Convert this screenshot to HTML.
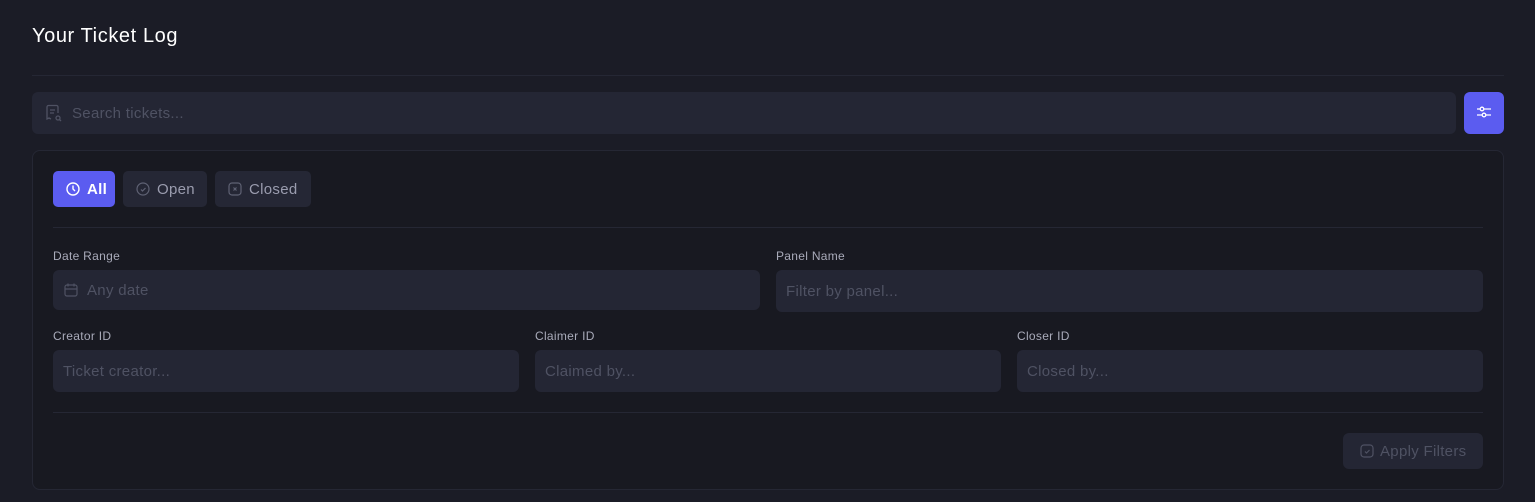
<!DOCTYPE html><html><head><style>
*{box-sizing:border-box;margin:0;padding:0}
body{width:1535px;height:502px;background:#1b1c26;font-family:"Liberation Sans",sans-serif;overflow:hidden;position:relative;letter-spacing:0.3px}
.a{position:absolute}
.in{position:absolute;background:#242634;border-radius:6px;color:#4f5263;font-size:15px;display:flex;align-items:center}
.lbl{position:absolute;color:#a9abba;font-size:12px}
.tab{position:absolute;top:171px;height:36px;border-radius:5px;background:#252735;color:#9a9cae;font-size:15px;display:flex;align-items:center;gap:7px;padding-left:13px}
</style></head><body>
<div class="a" style="left:32px;top:25px;color:#fff;font-size:20px;letter-spacing:0.6px">Your Ticket Log</div>
<div class="a" style="left:32px;top:75px;width:1472px;height:1px;background:#252734"></div>
<div class="in" style="left:32px;top:92px;width:1424px;height:42px;padding-left:40px">Search tickets...</div>
<svg class="a" style="left:45px;top:104px" width="18" height="18" fill="none" stroke="#4f5263" stroke-width="1.3"><path d="M13 9V3a1.5 1.5 0 0 0-1.5-1.5h-8A1.5 1.5 0 0 0 2 3v12l2-1 2 1M5 6h5M5 9h4"/><circle cx="13" cy="14" r="2"/><path d="M14.5 15.5l1.5 1.5"/></svg>
<div class="a" style="left:1464px;top:92px;width:40px;height:42px;background:#5b5cf0;border-radius:6px"></div>
<svg class="a" style="left:1476px;top:104px" width="16" height="16" fill="none" stroke="#fff" stroke-width="1.3"><path d="M1 5h3M8 5h7M1 11h5M10 11h5"/><circle cx="6" cy="5" r="1.8"/><circle cx="8" cy="11" r="1.8"/></svg>
<div class="a" style="left:32px;top:150px;width:1472px;height:340px;background:#181921;border:1px solid #252734;border-radius:8px"></div>
<div class="tab" style="left:53px;width:62px;background:#5b5cf0;color:#fff;font-weight:bold"><svg width="14" height="14" fill="none" stroke="#fff" stroke-width="1.4"><circle cx="7" cy="7" r="6"/><path d="M7 3.5V7l2 2"/></svg>All</div>
<div class="tab" style="left:123px;width:84px"><svg width="14" height="14" fill="none" stroke="#5f6274" stroke-width="1.2"><circle cx="7" cy="7" r="6"/><path d="M5 7.5l1.5 1.5 3-3"/></svg>Open</div>
<div class="tab" style="left:215px;width:96px"><svg width="14" height="14" fill="none" stroke="#5f6274" stroke-width="1.2"><rect x="1" y="1" width="12" height="12" rx="3"/><path d="M5.5 5.5l3 3M8.5 5.5l-3 3"/></svg>Closed</div>
<div class="a" style="left:53px;top:227px;width:1430px;height:1px;background:#252734"></div>
<div class="lbl" style="left:53px;top:249px">Date Range</div>
<div class="lbl" style="left:776px;top:249px">Panel Name</div>
<div class="in" style="left:53px;top:270px;width:707px;height:40px;padding-left:34px">Any date</div>
<svg class="a" style="left:64px;top:283px" width="14" height="14" fill="none" stroke="#4f5263" stroke-width="1.2"><rect x="1" y="2" width="12" height="11" rx="2"/><path d="M1 6h12M4 0.5v3M10 0.5v3"/></svg>
<div class="in" style="left:776px;top:270px;width:707px;height:42px;padding-left:10px">Filter by panel...</div>
<div class="lbl" style="left:53px;top:329px">Creator ID</div>
<div class="lbl" style="left:535px;top:329px">Claimer ID</div>
<div class="lbl" style="left:1017px;top:329px">Closer ID</div>
<div class="in" style="left:53px;top:350px;width:466px;height:42px;padding-left:10px">Ticket creator...</div>
<div class="in" style="left:535px;top:350px;width:466px;height:42px;padding-left:10px">Claimed by...</div>
<div class="in" style="left:1017px;top:350px;width:466px;height:42px;padding-left:10px">Closed by...</div>
<div class="a" style="left:53px;top:412px;width:1430px;height:1px;background:#252734"></div>
<div class="in" style="left:1343px;top:433px;width:140px;height:36px;padding-left:37px;color:#4f5263">Apply Filters</div>
<svg class="a" style="left:1360px;top:444px" width="14" height="14" fill="none" stroke="#4f5263" stroke-width="1.2"><rect x="1" y="1" width="12" height="12" rx="3"/><path d="M5 7.5l1.5 1.5 3-3"/></svg>
</body></html>
